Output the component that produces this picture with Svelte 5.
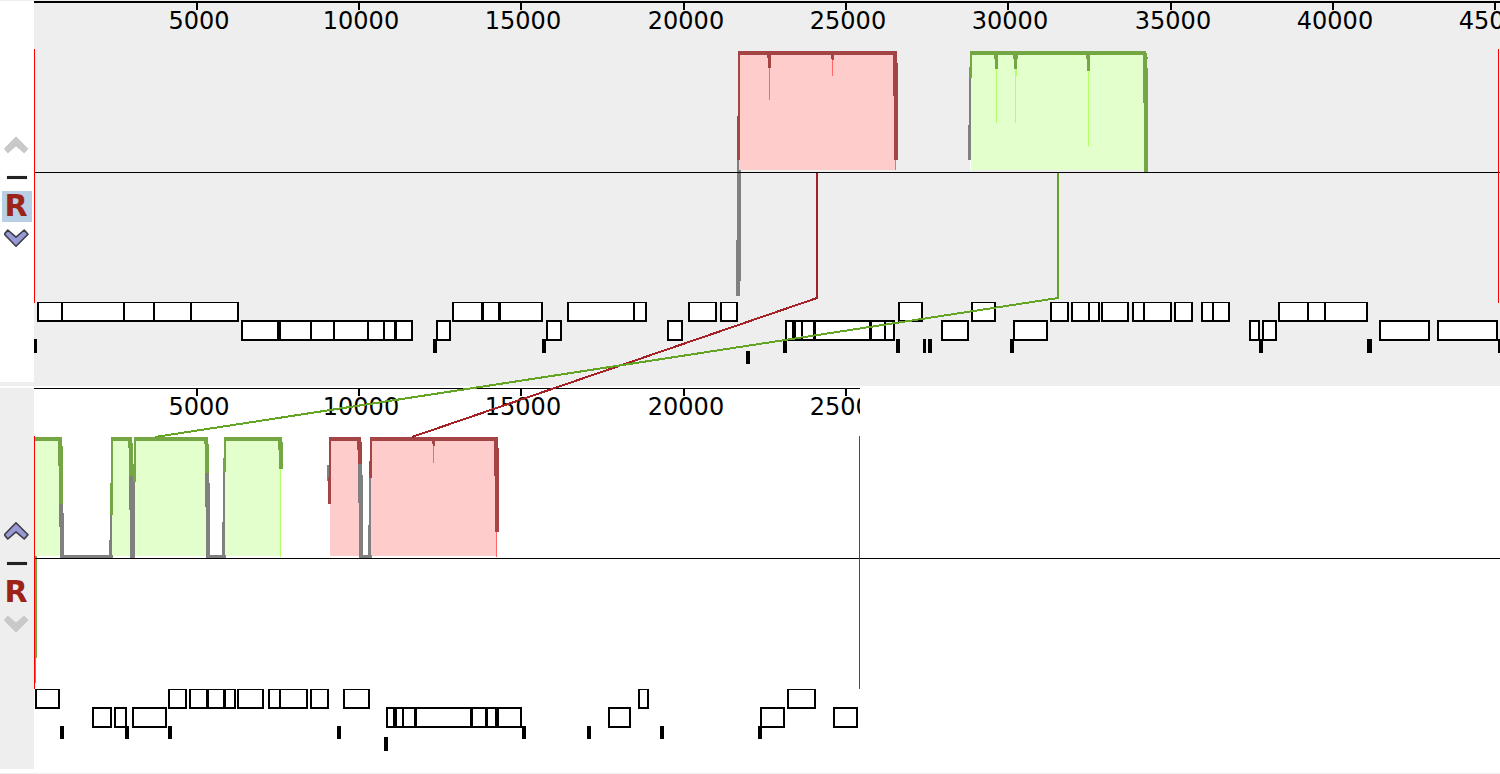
<script>
  const SPAN = 162.3;
  const marks = (count) =>
    Array.from({ length: count }, (_, i) => ({
      x: Math.floor(34 + SPAN * (i + 1)),
      label: (i + 1) * 5000
    }));

  const red = { fill: '#ffcccc', line: '#a54444', thin: '#ff6666' };
  const green = { fill: '#e3ffcc', line: '#74a744', thin: '#b2ff66' };
  const gray = '#808080';

  // Rectangles are [left, top, right, bottom], measured from the top of each panel.
  const panels = [
    {
      name: 'Sequence 1',
      reference: true,
      canUp: false,
      canDown: true,
      top: 0,
      end: null,
      axis: [1, 2],
      marks: marks(9),
      limits: [34, 1498],
      limitTop: 49,
      plots: [
        [red.fill, [[739, 51, 896, 170]]],
        [green.fill, [[971, 51, 1145, 170]]],
        ['#ffffff', [[970, 160, 971, 170]]],
        [red.thin, [[769, 55, 770, 100], [832, 55, 833, 76], [895, 160, 896, 170]]],
        [green.thin, [[996, 55, 997, 123], [1015, 55, 1016, 123], [1016, 55, 1017, 76], [1088, 55, 1089, 146]]],
        [gray, [[737, 160, 739, 170], [737, 170, 741, 281], [736, 240, 740, 296], [969, 78, 971, 160], [968, 125, 971, 160]]],
        [red.line, [[738, 51, 897, 55], [738, 51, 740, 160], [737, 116, 740, 160], [893, 51, 897, 96], [894, 63, 898, 160], [767, 55, 771, 58], [768, 55, 771, 68], [831, 55, 834, 59], [832, 59, 834, 60]]],
        [green.line, [[970, 51, 1146, 55], [970, 51, 972, 78], [969, 67, 972, 78], [1143, 51, 1146, 103], [1144, 53, 1147, 172], [1147, 57, 1148, 59], [1144, 68, 1148, 172], [994, 55, 998, 59], [995, 55, 998, 69], [1013, 55, 1018, 59], [1014, 55, 1017, 69], [1086, 55, 1090, 59], [1087, 55, 1090, 71]]]
      ],
      rows: [302, 320, 339, 351],
      tickHeights: [14, 13],
      forward: [
        [[39, 61], [63, 123], [125, 153], [155, 190], [192, 237]],
        [[454, 481], [484, 498], [501, 541]],
        [[569, 633], [635, 645]],
        [[690, 715]], [[722, 736]], [[900, 921]], [[973, 994]], [[1052, 1067]],
        [[1073, 1088], [1090, 1098]],
        [[1103, 1127]],
        [[1134, 1143], [1145, 1170]],
        [[1176, 1191]],
        [[1203, 1212], [1214, 1228]],
        [[1280, 1307], [1309, 1324], [1326, 1366]]
      ],
      reverse: [
        [[243, 277], [281, 310], [312, 333], [335, 367], [369, 383], [385, 394], [397, 411]],
        [[438, 449]], [[548, 560]], [[669, 681]],
        [[787, 792], [796, 801], [803, 813], [816, 869], [872, 884], [886, 893]],
        [[943, 967]], [[1015, 1046]], [[1251, 1258]], [[1264, 1275]], [[1381, 1428]], [[1439, 1496]]
      ],
      rna: [[34, 3], [433, 4], [542, 4], [783, 4], [896, 4], [923, 3], [928, 4], [1010, 4], [1259, 4], [1367, 5], [1498, 4]],
      repeats: [[746, 4]]
    },
    {
      name: 'Sequence 2',
      reference: false,
      canUp: true,
      canDown: false,
      top: 386,
      end: 860,
      axis: [2, 1],
      marks: marks(5),
      limits: [34, 859],
      limitTop: 50,
      plots: [
        [green.fill, [[35, 51, 61, 170], [112, 51, 131, 170], [135, 51, 207, 170], [225, 51, 281, 170]]],
        [red.fill, [[330, 51, 360, 170], [371, 51, 496, 170]]],
        [green.thin, [[280, 83, 281, 171]]],
        [red.thin, [[433, 55, 434, 77], [496, 146, 497, 171]]],
        [gray, [
          [59, 118, 63, 141], [60, 127, 64, 170], [60, 169, 113, 172], [109, 154, 112, 170], [110, 129, 112, 170],
          [129, 90, 134, 124], [130, 96, 135, 172],
          [205, 87, 209, 121], [206, 97, 210, 172], [206, 169, 226, 172], [222, 136, 225, 172], [223, 86, 225, 172],
          [327, 79, 329, 95], [358, 78, 362, 117], [359, 89, 363, 172], [359, 169, 372, 172], [368, 139, 371, 172], [369, 92, 371, 172]
        ]],
        [green.line, [
          [35, 51, 62, 55], [58, 51, 62, 80], [59, 60, 63, 118],
          [110, 97, 113, 129], [111, 51, 113, 97], [111, 51, 132, 55], [128, 51, 132, 62], [129, 57, 133, 90],
          [133, 78, 136, 96], [134, 51, 136, 96], [134, 51, 208, 55], [204, 51, 208, 58], [205, 58, 209, 87],
          [223, 72, 226, 86], [224, 51, 226, 86], [224, 51, 282, 55], [278, 51, 282, 64], [279, 56, 283, 83],
          [35, 170, 37, 272], [35, 272, 36, 297]
        ]],
        [red.line, [
          [329, 51, 361, 55], [329, 51, 331, 118], [328, 91, 331, 118], [357, 51, 361, 64], [358, 56, 362, 78],
          [369, 75, 372, 92], [370, 51, 372, 92], [370, 51, 498, 55], [494, 51, 498, 90], [495, 62, 499, 146],
          [432, 55, 435, 58], [433, 55, 435, 60]
        ]]
      ],
      rows: [303, 321, 340, 351],
      tickHeights: [13, 14],
      forward: [
        [[37, 58]], [[170, 185]],
        [[191, 206], [209, 223], [226, 234]],
        [[239, 262]],
        [[270, 279], [281, 306]],
        [[312, 327]], [[345, 368]], [[640, 647]], [[789, 814]]
      ],
      reverse: [
        [[94, 110]], [[116, 125]], [[134, 165]],
        [[388, 393], [397, 402], [404, 414], [417, 470], [473, 485], [488, 495], [499, 520]],
        [[610, 629]], [[762, 783]], [[835, 856]]
      ],
      rna: [[60, 4], [125, 4], [168, 4], [337, 4], [522, 4], [587, 4], [660, 4], [758, 4]],
      repeats: [[384, 4]]
    }
  ];

  const outline = (cells) => {
    const left = cells[0][0] - 2;
    return { left, width: cells[cells.length - 1][1] + 2 - left };
  };
</script>

{#snippet chevron(down, active)}
  <svg class="chevron" class:down width="26" height="20" viewBox="1 0 26 20" aria-hidden="true">
    <path
      d="M13 1.8 L25 13.8 L21.2 18 L13 10.9 L4.8 18 L1.3 13.8 Z"
      fill={active ? '#9999d6' : '#c9c9c9'}
      stroke={active ? '#3c3c44' : '#c2c2c2'}
      stroke-width={active ? 1.6 : 0.7}
      stroke-linejoin="round"
    />
  </svg>
{/snippet}

{#snippet genes(groups, y, height, lid)}
  {#each groups as cells}
    {@const box = outline(cells)}
    <rect x={box.left} {y} width={box.width} {height} />
    {#each cells as [from, to]}
      <rect class="cell" x={from} y={y + lid} width={to - from} height={height - lid - 2} />
    {/each}
  {/each}
{/snippet}

<main class="viewer">
  {#each panels as panel, index}
    <section class="panel" class:shaded={panel.reference} aria-label={panel.name}>
      <div class="controls">
        <button aria-label="Move up" disabled={!panel.canUp}>{@render chevron(false, panel.canUp)}</button>
        <button class="collapse" aria-label="Hide sequence"><span class="dash"></span></button>
        <button class="ref" class:on={panel.reference} aria-label="R: set reference" aria-pressed={panel.reference}>R</button>
        <button aria-label="Move down" disabled={!panel.canDown}>{@render chevron(true, panel.canDown)}</button>
      </div>

      <svg class="track" aria-label="{panel.name} similarity and features">
        <defs>
          <clipPath id="ruler-{index}">
            <rect x="34" y="0" width={panel.end ? panel.end - 34 : '100%'} height="48" />
          </clipPath>
        </defs>
        <g transform="translate(-34 0)">
          <g clip-path="url(#ruler-{index})">
            <rect x="34" y={panel.axis[0]} width="100%" height={panel.axis[1]} />
            {#each panel.marks as mark}
              <rect x={mark.x} y="3" width="2" height="7" />
              <text x={mark.x + 3} y="29">{mark.label}</text>
            {/each}
          </g>

          {#each panel.plots as [color, shapes]}
            {#each shapes as [left, top, right, bottom]}
              <rect x={left} y={top} width={right - left} height={bottom - top} fill={color} />
            {/each}
          {/each}
          <rect x="34" y="172" width="100%" height="1" />

          {@render genes(panel.forward, panel.rows[0], 20, 1)}
          {@render genes(panel.reverse, panel.rows[1], 21, 2)}
          {#each panel.rna as [x, width]}
            <rect {x} y={panel.rows[2]} {width} height={panel.tickHeights[0]} />
          {/each}
          {#each panel.repeats as [x, width]}
            <rect {x} y={panel.rows[3]} {width} height={panel.tickHeights[1]} />
          {/each}

          {#each panel.limits as x}
            <rect class="limit" {x} y={panel.limitTop} width="1" height={panel.rows[0] + 1 - panel.limitTop - index} />
          {/each}
        </g>
      </svg>
    </section>
  {/each}

  <svg class="links" aria-hidden="true">
    <path d="M817 173 V298 L412 437" stroke="#a52024" />
    <path d="M1058 173 V298 L155 437" stroke="#64a424" />
  </svg>
</main>

<style>
  :global(body) {
    margin: 0;
    background: #ffffff;
  }

  .viewer {
    position: relative;
    overflow: hidden;
    border-bottom: 1px solid #eeeeee;
    font-family: 'DejaVu Sans', sans-serif;
  }

  .panel {
    display: grid;
    grid-template-columns: 34px minmax(0, 1fr);
    background: #ffffff;
  }

  .shaded {
    background: #eeeeee;
  }

  .controls {
    display: flex;
    flex-direction: column;
    align-items: flex-start;
    box-sizing: border-box;
    margin: 2px 0 4px;
    padding: 132px 0 0 2px;
    background: #eeeeee;
  }

  .shaded .controls {
    margin: 1px 0 4px;
    padding-top: 133px;
    background: #ffffff;
  }

  button {
    display: flex;
    align-items: center;
    justify-content: center;
    width: 30px;
    height: 21px;
    padding: 0;
    border: 0;
    background: transparent;
  }

  .collapse {
    height: 36px;
    padding-top: 8px;
    box-sizing: border-box;
  }

  .dash {
    width: 20px;
    height: 3px;
    background: #222222;
    box-shadow: 0 0 1px #777777;
  }

  .ref {
    box-sizing: border-box;
    height: 31px;
    margin-bottom: 5px;
    padding: 0 2px 2px 0;
    font: bold 30px/29px 'DejaVu Sans', sans-serif;
    color: #9b2318;
  }

  .on {
    background: #b8cfe5;
  }

  .chevron {
    display: block;
  }

  .down {
    transform: scaleY(-1);
  }

  .track {
    display: block;
    width: 100%;
    height: 386px;
    shape-rendering: crispEdges;
  }

  .panel:not(.shaded) .track {
    height: 387px;
  }

  text {
    font-size: 24px;
    text-anchor: middle;
  }

  .cell {
    fill: #ffffff;
  }

  .limit {
    fill: #ff0000;
  }

  .links {
    position: absolute;
    inset: 0;
    width: 100%;
    height: 100%;
    fill: none;
    stroke-width: 2;
    shape-rendering: crispEdges;
    pointer-events: none;
  }
</style>
